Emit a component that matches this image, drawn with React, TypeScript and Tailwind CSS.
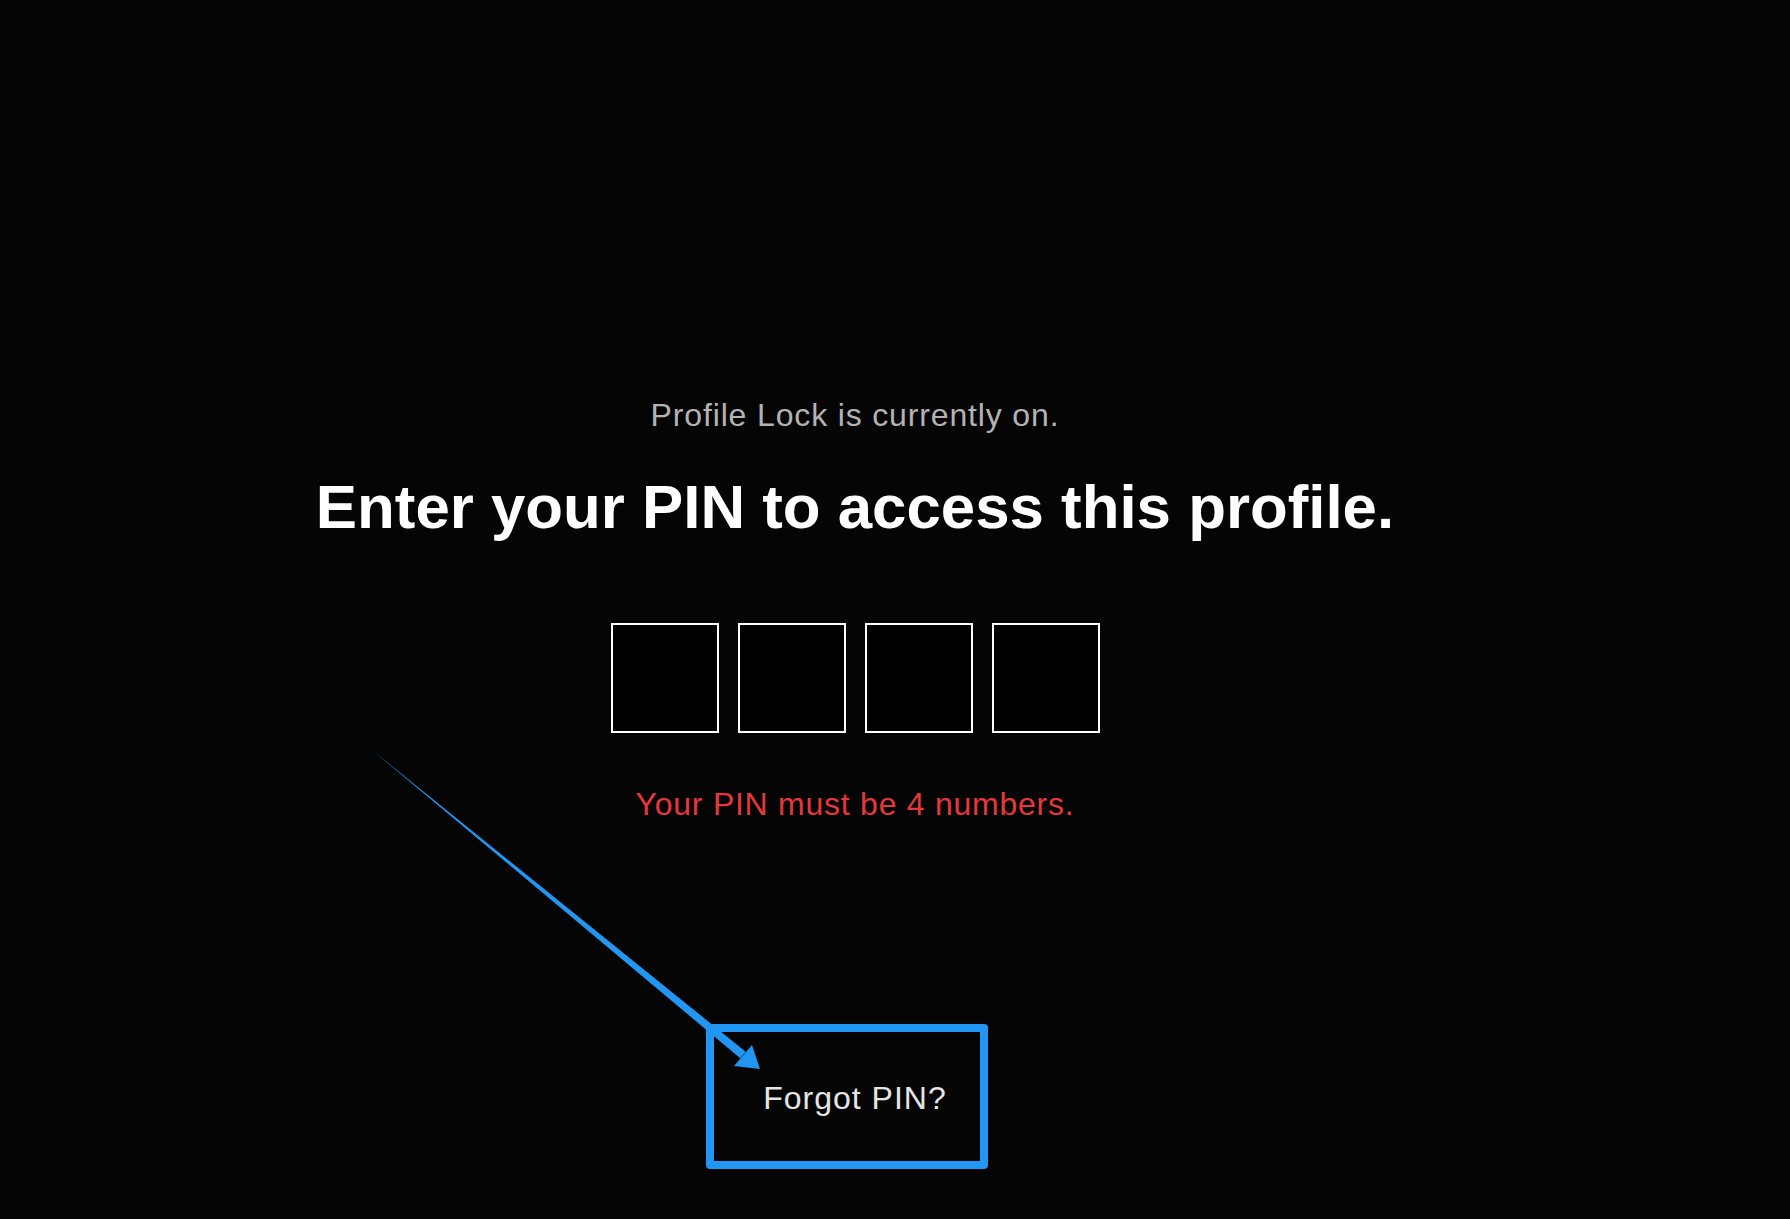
import React from 'react';

const PinBox: React.FC = () => (
  <div className="w-[108px] h-[110px] border-2 border-white bg-black" />
);

const App: React.FC = () => {
  // arrow geometry (page coordinates)
  const tip = { x: 760, y: 1069 };
  const base = { x: 743, y: 1055 };

  return (
    <div
      className="relative min-h-[1219px] w-full bg-[#050505] overflow-hidden"
      style={{ fontFamily: '"Liberation Sans", Arial, sans-serif' }}
    >
      <div className="flex flex-col items-center pt-[399px] pr-[80px]">
        <p className="text-[32px] leading-[32px] tracking-[0.85px] text-[#b3b3b3]">
          Profile Lock is currently on.
        </p>
        <h1 className="mt-[45px] text-[61.8px] leading-[61.8px] font-bold text-white">
          Enter your PIN to access this profile.
        </h1>
        <div className="mt-[85px] flex gap-[19px]">
          <PinBox />
          <PinBox />
          <PinBox />
          <PinBox />
        </div>
        <p className="mt-[55px] text-[32px] leading-[32px] tracking-[0.75px] text-[#e5383b]">
          Your PIN must be 4 numbers.
        </p>
        <button className="mt-[262px] text-[32px] leading-[32px] tracking-[1px] text-[#e5e5e5]">
          Forgot PIN?
        </button>
      </div>

      {/* annotation overlay */}
      <div className="absolute left-[706px] top-[1024px] w-[282px] h-[145px] border-8 border-[#2196f3] rounded-[4px] pointer-events-none" />
      <svg
        className="absolute inset-0 pointer-events-none"
        width="1790"
        height="1219"
        viewBox="0 0 1790 1219"
      >
        <polygon
          points={`372,750 ${base.x - 2.7},${base.y + 3.3} ${base.x + 2.7},${base.y - 3.3}`}
          fill="#2196f3"
        />
        <polygon
          points={`${tip.x},${tip.y} 734,1066 752,1045`}
          fill="#2196f3"
        />
      </svg>
    </div>
  );
};

export default App;
